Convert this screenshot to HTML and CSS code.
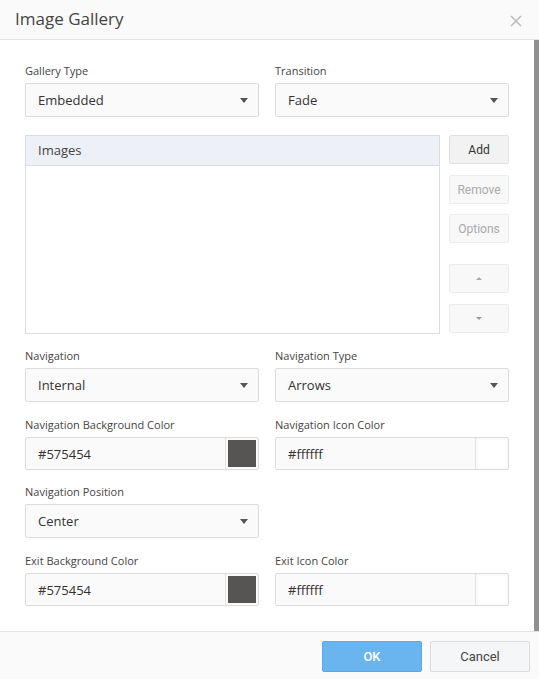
FILE: index.html
```html
<!DOCTYPE html>
<html>
<head>
<meta charset="utf-8">
<link rel="stylesheet" href="styles.css">
</head>
<body>
<div class="dialog">
  <div class="header">
    <div class="title">Image Gallery</div>
    <svg class="close" width="12" height="12" viewBox="0 0 12 12"><path d="M1 1L11 11M11 1L1 11" stroke="#bdbdbd" stroke-width="1.6" fill="none"/></svg>
  </div>
  <div class="body">
    <div class="grid">
      <div class="field">
        <div class="label">Gallery Type</div>
        <div class="select"><span>Embedded</span><i class="caret"></i></div>
      </div>
      <div class="field">
        <div class="label">Transition</div>
        <div class="select"><span>Fade</span><i class="caret"></i></div>
      </div>
    </div>
    <div class="images-row">
      <div class="list">
        <div class="list-head">Images</div>
      </div>
      <div class="btns">
        <div class="btn add">Add</div>
        <div class="btn dis remove">Remove</div>
        <div class="btn dis options">Options</div>
        <div class="btn dis up"><i class="tri-up"></i></div>
        <div class="btn dis down"><i class="tri-down"></i></div>
      </div>
    </div>
    <div class="grid">
      <div class="field">
        <div class="label">Navigation</div>
        <div class="select"><span>Internal</span><i class="caret"></i></div>
      </div>
      <div class="field">
        <div class="label">Navigation Type</div>
        <div class="select"><span>Arrows</span><i class="caret"></i></div>
      </div>
      <div class="field">
        <div class="label">Navigation Background Color</div>
        <div class="color"><span>#575454</span><div class="swatch-box"><div class="swatch dark"></div></div></div>
      </div>
      <div class="field">
        <div class="label">Navigation Icon Color</div>
        <div class="color"><span>#ffffff</span><div class="swatch-box"><div class="swatch white"></div></div></div>
      </div>
      <div class="field tight">
        <div class="label">Navigation Position</div>
        <div class="select"><span>Center</span><i class="caret"></i></div>
      </div>
      <div class="field tight empty"></div>
      <div class="field">
        <div class="label">Exit Background Color</div>
        <div class="color"><span>#575454</span><div class="swatch-box"><div class="swatch dark"></div></div></div>
      </div>
      <div class="field">
        <div class="label">Exit Icon Color</div>
        <div class="color"><span>#ffffff</span><div class="swatch-box"><div class="swatch white"></div></div></div>
      </div>
    </div>
    <div class="scrollbar"></div>
  </div>
  <div class="footer">
    <div class="fbtn ok">OK</div>
    <div class="fbtn cancel">Cancel</div>
  </div>
</div>
</body>
</html>
```

FILE: styles.css
```css
html, body {
  margin: 0;
  padding: 0;
  background: #fff;
}
body {
  font-family: "Open Sans", "Liberation Sans", sans-serif;
  color: #444;
}
.dialog {
  width: 539px;
  height: 679px;
  display: flex;
  flex-direction: column;
  overflow: hidden;
}
.header {
  height: 39px;
  border-bottom: 1px solid #e3e3e3;
  background: #fafafa;
  display: flex;
  align-items: center;
  justify-content: space-between;
  padding: 0 17px 0 15px;
  flex: none;
}
.title {
  font-size: 17px;
  color: #444;
  margin-top: -3px;
}
.close {
  margin-top: 2px;
}
.body {
  flex: 1;
  position: relative;
  padding: 23px 30px 0 25px;
}
.grid {
  display: grid;
  grid-template-columns: 234px 234px;
  column-gap: 16px;
  row-gap: 15px;
}
.field {
  display: flex;
  flex-direction: column;
}
.field.tight {
  margin-top: -1px;
}
.label {
  font-size: 11px;
  line-height: 15px;
  height: 15px;
  margin-bottom: 5px;
  color: #444;
}
.select, .color {
  box-sizing: border-box;
  height: 34px;
  border: 1px solid #dcdcdc;
  border-radius: 2px;
  background: #fafafa;
  display: flex;
  align-items: center;
  font-size: 13px;
  color: #333;
}
.select {
  justify-content: space-between;
  padding: 0 10px 0 12px;
}
.caret {
  width: 0;
  height: 0;
  border-left: 4px solid transparent;
  border-right: 4px solid transparent;
  border-top: 5px solid #555;
}
.color {
  height: 33px;
  padding-left: 12px;
  justify-content: space-between;
}
.swatch-box {
  width: 32px;
  height: 31px;
  border-left: 1px solid #e2e2e2;
  display: flex;
  align-items: center;
  justify-content: center;
}
.swatch {
  width: 28px;
  height: 27px;
}
.swatch.dark {
  background: #575454;
}
.swatch.white {
  background: #fff;
}
.images-row {
  display: flex;
  gap: 9px;
  margin: 18px 0 14px;
}
.list {
  box-sizing: border-box;
  flex: none;
  width: 415px;
  height: 199px;
  border: 1px solid #dcdcdc;
  background: #fff;
}
.list-head {
  height: 29px;
  background: #edf0f6;
  border-bottom: 1px solid #dcdcdc;
  font-size: 13px;
  line-height: 29px;
  padding-left: 12px;
  color: #444;
}
.btns {
  flex: none;
  display: flex;
  flex-direction: column;
  width: 60px;
}
.btn {
  box-sizing: border-box;
  height: 29px;
  border: 1px solid #e0e0e0;
  border-radius: 2px;
  background: #f2f2f2;
  font-family: Roboto, "Liberation Sans", sans-serif;
  font-size: 12px;
  color: #333;
  display: flex;
  align-items: center;
  justify-content: center;
}
.btn.dis {
  background: #f8f8f8;
  border-color: #ececec;
  color: #aaa;
}
.remove { margin-top: 11px; }
.options { margin-top: 10px; }
.up { margin-top: 21px; }
.down { margin-top: 11px; }
.tri-up, .tri-down {
  width: 0;
  height: 0;
  border-left: 3px solid transparent;
  border-right: 3px solid transparent;
}
.tri-up { border-bottom: 3px solid #aaa; }
.tri-down { border-top: 3px solid #999; }
.scrollbar {
  position: absolute;
  right: 0;
  top: 0;
  bottom: 0;
  width: 5px;
  background: #8f8f8f;
}
.footer {
  flex: none;
  box-sizing: border-box;
  height: 48px;
  border-top: 1px solid #e3e3e3;
  background: #fafafa;
  display: flex;
  justify-content: flex-end;
  align-items: flex-start;
  gap: 8px;
  padding: 9px 9px 0 0;
}
.fbtn {
  box-sizing: border-box;
  width: 100px;
  height: 31px;
  border-radius: 2px;
  font-family: Roboto, "Liberation Sans", sans-serif;
  font-size: 13px;
  display: flex;
  align-items: center;
  justify-content: center;
}
.ok {
  background: #6ab4ef;
  border: 1px solid #5aa9e8;
  color: #fff;
  font-weight: 500;
}
.cancel {
  background: #f5f6f8;
  border: 1px solid #dcdcdc;
  color: #444;
}
```
